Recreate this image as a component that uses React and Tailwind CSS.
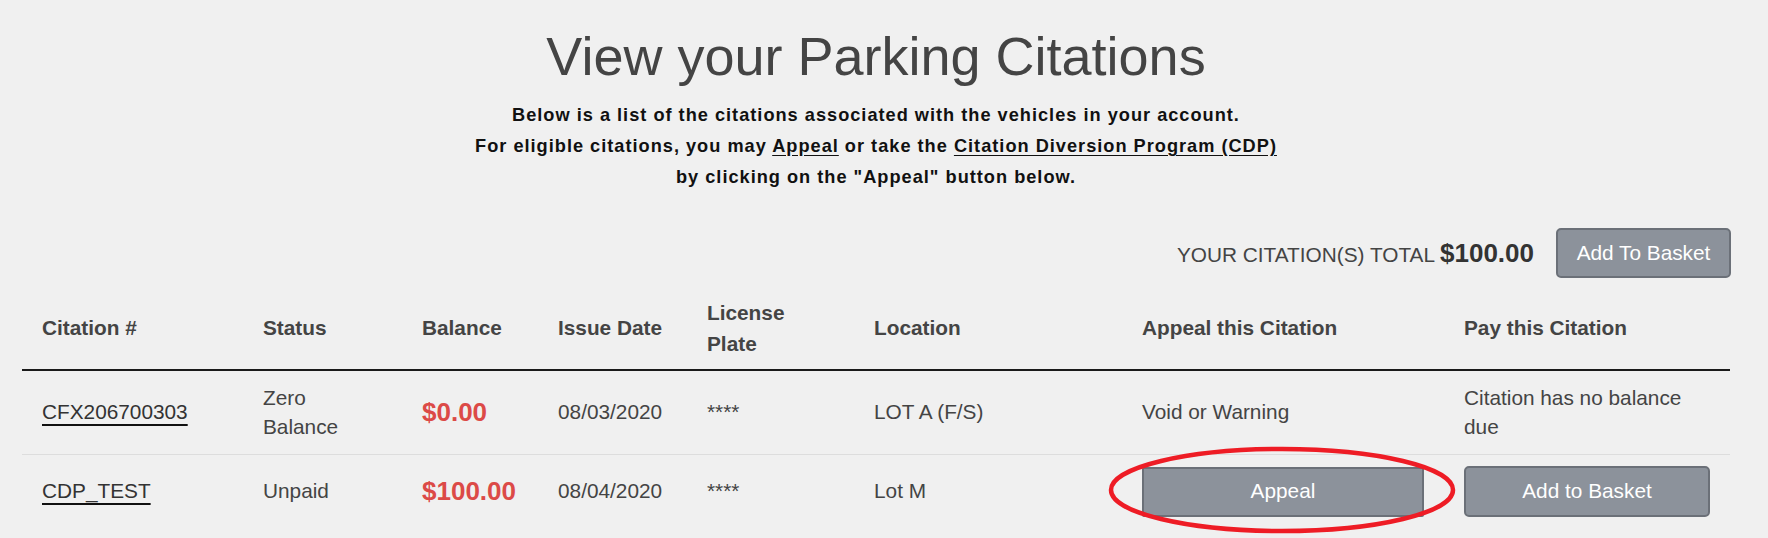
import React from 'react';

const columns = [
  { label: 'Citation #', width: 221 },
  { label: 'Status', width: 159 },
  { label: 'Balance', width: 136 },
  { label: 'Issue Date', width: 149 },
  { label: 'License Plate', width: 167 },
  { label: 'Location', width: 268 },
  { label: 'Appeal this Citation', width: 322 },
  { label: 'Pay this Citation', width: 286 },
];

const citations = [
  {
    id: 'CFX206700303',
    status: 'Zero Balance',
    balance: '$0.00',
    date: '08/03/2020',
    plate: '****',
    location: 'LOT A (F/S)',
    appeal: 'Void or Warning',
    pay: 'Citation has no balance due',
  },
  {
    id: 'CDP_TEST',
    status: 'Unpaid',
    balance: '$100.00',
    date: '08/04/2020',
    plate: '****',
    location: 'Lot M',
    appeal: null,
    pay: null,
  },
];

function GrayButton({ children, className = '' }) {
  return (
    <button
      className={`border-2 border-[#6b7078] bg-[#8c929b] text-[20.8px] text-white ${className}`}
    >
      {children}
    </button>
  );
}

function CitationRow({ row, last }) {
  // rows holding buttons sit a little tighter
  const cell = `px-[20px] ${row.appeal ? 'py-[13px]' : 'py-[11px]'} align-middle`;
  return (
    <tr className={last ? '' : 'border-b border-[#dddddd]'}>
      <td className={cell}>
        <a className="text-[#333] underline decoration-[#111] decoration-2 underline-offset-[5px]">
          {row.id}
        </a>
      </td>
      <td className={cell}>{row.status}</td>
      <td className={`${cell} text-[26px] font-bold text-[#dc4a47]`}>{row.balance}</td>
      <td className={cell}>{row.date}</td>
      <td className={cell}>{row.plate}</td>
      <td className={cell}>{row.location}</td>
      <td className={cell}>
        {row.appeal ? row.appeal : <GrayButton className="h-[50px] w-full rounded-[2px]">Appeal</GrayButton>}
      </td>
      <td className={cell}>
        {row.pay ? row.pay : <GrayButton className="h-[51px] w-full rounded-[5px]">Add to Basket</GrayButton>}
      </td>
    </tr>
  );
}

export default function App() {
  return (
    <div className="relative min-h-screen bg-[#f0f0f0] font-['Liberation_Sans',Arial,sans-serif] text-[#444]">
      <div className="pl-[22px] pr-[38px] pt-[27px]">
        {/* Heading */}
        <h1 className="text-center text-[54px] leading-[59px] text-[#444]">View your Parking Citations</h1>
        <div className="mt-[14px] text-center text-[18.2px] font-bold leading-[31px] tracking-[1px] text-[#111]">
          <p>Below is a list of the citations associated with the vehicles in your account.</p>
          <p>
            For eligible citations, you may <a className="underline underline-offset-[3px]">Appeal</a> or take the{' '}
            <a className="underline underline-offset-[3px]">Citation Diversion Program (CDP)</a>
          </p>
          <p>by clicking on the "Appeal" button below.</p>
        </div>

        {/* Total */}
        <div className="mt-[35px] flex items-center justify-end">
          <span className="text-[20.8px] text-[#444]">
            YOUR CITATION(S) TOTAL <b className="text-[26px] text-[#333]">$100.00</b>
          </span>
          <GrayButton className="ml-[22px] mr-[-1px] h-[50px] w-[175px] rounded-[5px]">Add To Basket</GrayButton>
        </div>

        {/* Table */}
        <table className="mt-[9px] w-full table-fixed border-collapse text-left text-[20.8px] leading-[28.5px]">
          <colgroup>
            {columns.map((c) => (
              <col key={c.label} style={{ width: c.width }} />
            ))}
          </colgroup>
          <thead>
            <tr className="border-b-2 border-[#1a1a1a]">
              {columns.map((c) => (
                <th key={c.label} className="px-[20px] py-[9.5px] align-middle font-bold leading-[31.5px] text-[#444]">
                  {c.label}
                </th>
              ))}
            </tr>
          </thead>
          <tbody>
            {citations.map((row, i) => (
              <CitationRow key={row.id} row={row} last={i === citations.length - 1} />
            ))}
          </tbody>
        </table>
      </div>

      {/* red annotation circle */}
      <svg className="pointer-events-none absolute left-[1107px] top-[446px]" width="350" height="88" viewBox="0 0 350 88">
        <ellipse cx="175" cy="44" rx="171" ry="41" fill="none" stroke="#ee1c25" strokeWidth="4.5" />
      </svg>
    </div>
  );
}
